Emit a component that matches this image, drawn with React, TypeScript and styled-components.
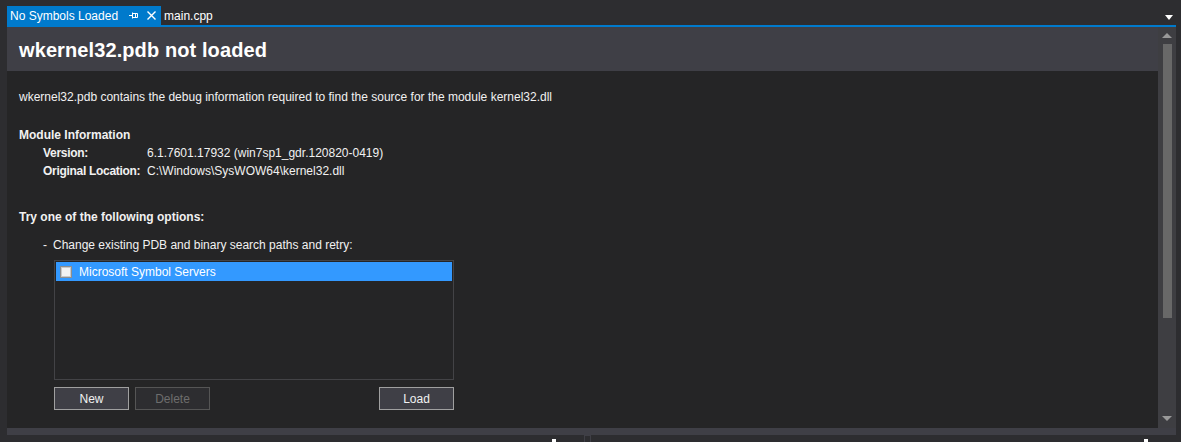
import styled, { createGlobalStyle } from 'styled-components';

const GlobalStyle = createGlobalStyle`
  html, body {
    margin: 0;
    padding: 0;
    background: #2d2d30;
  }
  body {
    font-family: "Liberation Sans", Arial, sans-serif;
    font-size: 12px;
    color: #f1f1f1;
  }
`;

const Window = styled.div`
  width: 1181px;
  height: 442px;
  background: #2d2d30;
  display: flex;
  flex-direction: column;
  overflow: hidden;
`;

const TabStrip = styled.div`
  height: 25px;
  display: flex;
  align-items: flex-end;
  padding: 0 8px 0 7px;
`;

const Tab = styled.div<{ $active?: boolean }>`
  height: 19px;
  display: flex;
  align-items: center;
  gap: 9px;
  padding: 0 5px 0 3px;
  background: ${p => (p.$active ? '#007acc' : 'transparent')};
  color: #ffffff;
  white-space: nowrap;
`;

const TabLabel = styled.span`
  margin-right: 2px;
`;

const TabIcon = styled.svg`
  display: block;
  flex: none;
`;

const Spacer = styled.div`
  flex: 1;
`;

const OverflowArrow = styled.div`
  align-self: center;
  margin-top: 10px;
  width: 0;
  height: 0;
  border-left: 4px solid transparent;
  border-right: 4px solid transparent;
  border-top: 5px solid #ffffff;
`;

const Well = styled.div`
  margin: 0 5px 0 7px;
  border-top: 2px solid #007acc;
  display: flex;
  flex-direction: column;
`;

const Scroller = styled.div`
  height: 401px;
  display: flex;
`;

const Document = styled.div`
  flex: 1;
  display: flex;
  flex-direction: column;
`;

const Header = styled.div`
  height: 44px;
  flex: none;
  background: #3f3f46;
  display: flex;
  align-items: center;
  padding-left: 12px;
`;

const Title = styled.h1`
  margin: 0;
  font-size: 20px;
  font-weight: bold;
  color: #ffffff;
  padding-top: 2px;
  letter-spacing: 0.1px;
`;

const Body = styled.div`
  flex: 1;
  background: #252526;
  padding: 18px 0 0 12px;
  line-height: 16px;
`;

const Para = styled.div<{ $gap?: number }>`
  margin-top: ${p => p.$gap ?? 0}px;
`;

const Heading = styled.div<{ $gap?: number }>`
  margin-top: ${p => p.$gap ?? 0}px;
  font-weight: bold;
`;

const InfoGrid = styled.div`
  margin-top: 2px;
  padding-left: 24px;
  display: grid;
  grid-template-columns: 104px auto;
  row-gap: 1px;
  line-height: 17px;
`;

const InfoLabel = styled.span`
  font-weight: bold;
  letter-spacing: -0.3px;
`;

const Option = styled.div`
  margin-top: 12px;
  padding-left: 24px;
  display: flex;
  gap: 6px;
`;

const OptionBlock = styled.div`
  padding-left: 35px;
  width: 400px;
`;

const ListBox = styled.div`
  margin-top: 7px;
  height: 116px;
  border: 1px solid #434346;
  padding: 1px;
`;

const ListItem = styled.div<{ $selected?: boolean }>`
  height: 19px;
  display: flex;
  align-items: center;
  gap: 7px;
  padding-left: 4px;
  background: ${p => (p.$selected ? '#3399ff' : 'transparent')};
  color: #ffffff;
`;

const CheckBox = styled.span`
  width: 10px;
  height: 10px;
  border: 1px solid #8e8e8e;
  background: #f2f2f2;
  box-shadow: inset 0 0 0 1px #c9c9c9;
`;

const ButtonRow = styled.div`
  margin-top: 7px;
  display: flex;
  gap: 6px;
`;

const Button = styled.button<{ $disabled?: boolean }>`
  width: 75px;
  height: 23px;
  padding: 0;
  font-family: inherit;
  font-size: 12px;
  background: ${p => (p.$disabled ? '#2d2d30' : '#3f3f46')};
  border: 1px solid ${p => (p.$disabled ? '#555555' : '#a0a0a0')};
  color: ${p => (p.$disabled ? '#6d6d6d' : '#f1f1f1')};
`;

const PushRight = styled.div`
  margin-left: auto;
`;

const ScrollBar = styled.div`
  width: 18px;
  flex: none;
  background: #3e3e42;
  display: flex;
  flex-direction: column;
  align-items: center;
  padding: 6px 0 7px 0;
  box-sizing: border-box;
`;

const Arrow = styled.div<{ $down?: boolean }>`
  width: 0;
  height: 0;
  border-left: 5px solid transparent;
  border-right: 5px solid transparent;
  ${p =>
    p.$down ? 'border-top: 5px solid #999999;' : 'border-bottom: 5px solid #999999;'}
`;

const Thumb = styled.div`
  width: 9px;
  height: 274px;
  margin-top: 6px;
  background: #686868;
`;

const HSplit = styled.div`
  height: 7px;
  background: #3f3f46;
`;

const BottomStrip = styled.div`
  flex: 1;
  display: flex;
  padding: 0 5px 0 7px;
`;

const Pane = styled.div<{ $width?: number }>`
  ${p => (p.$width ? `width: ${p.$width}px; flex: none;` : 'flex: 1;')}
  box-sizing: border-box;
  display: flex;
  justify-content: flex-end;
  align-items: flex-end;
  padding-right: 28px;
`;

const PaneDivider = styled.div`
  width: 5px;
  border: 1px solid #3f3f46;
  border-bottom: none;
`;

const PaneMark = styled.div`
  width: 4px;
  height: 3px;
  background: #ffffff;
`;

const PinIcon = () => (
  <TabIcon width="9" height="9" viewBox="0 0 9 9">
    <path d="M0 4.5H3M3.5 1.5V7.5M3.5 2.5H8.5V6.5H3.5M6.5 2.5V6" stroke="#ffffff" strokeWidth="1" fill="none" />
  </TabIcon>
);

const CloseIcon = () => (
  <TabIcon width="9" height="9" viewBox="0 0 9 9">
    <path d="M0.5 0.5L8.5 8.5M8.5 0.5L0.5 8.5" stroke="#ffffff" strokeWidth="1.4" fill="none" />
  </TabIcon>
);

const App = () => {
  return (
    <Window>
      <GlobalStyle />
      <TabStrip>
        <Tab $active>
          <TabLabel>No Symbols Loaded</TabLabel>
          <PinIcon />
          <CloseIcon />
        </Tab>
        <Tab>main.cpp</Tab>
        <Spacer />
        <OverflowArrow />
      </TabStrip>
      <Well>
        <Scroller>
          <Document>
            <Header>
              <Title>wkernel32.pdb not loaded</Title>
            </Header>
            <Body>
              <Para>
                wkernel32.pdb contains the debug information required to find the source for the module kernel32.dll
              </Para>
              <Heading $gap={22}>Module Information</Heading>
              <InfoGrid>
                <InfoLabel>Version:</InfoLabel>
                <span>6.1.7601.17932 (win7sp1_gdr.120820-0419)</span>
                <InfoLabel>Original Location:</InfoLabel>
                <span>C:\Windows\SysWOW64\kernel32.dll</span>
              </InfoGrid>
              <Heading $gap={29}>Try one of the following options:</Heading>
              <Option>
                <span>-</span>
                <span>Change existing PDB and binary search paths and retry:</span>
              </Option>
              <OptionBlock>
                <ListBox>
                  <ListItem $selected>
                    <CheckBox />
                    Microsoft Symbol Servers
                  </ListItem>
                </ListBox>
                <ButtonRow>
                  <Button>New</Button>
                  <Button $disabled>Delete</Button>
                  <PushRight>
                    <Button>Load</Button>
                  </PushRight>
                </ButtonRow>
              </OptionBlock>
            </Body>
          </Document>
          <ScrollBar>
            <Arrow />
            <Thumb />
            <Spacer />
            <Arrow $down />
          </ScrollBar>
        </Scroller>
        <HSplit />
      </Well>
      <BottomStrip>
        <Pane $width={577}>
          <PaneMark />
        </Pane>
        <PaneDivider />
        <Pane>
          <PaneMark />
        </Pane>
      </BottomStrip>
    </Window>
  );
};

export default App;
